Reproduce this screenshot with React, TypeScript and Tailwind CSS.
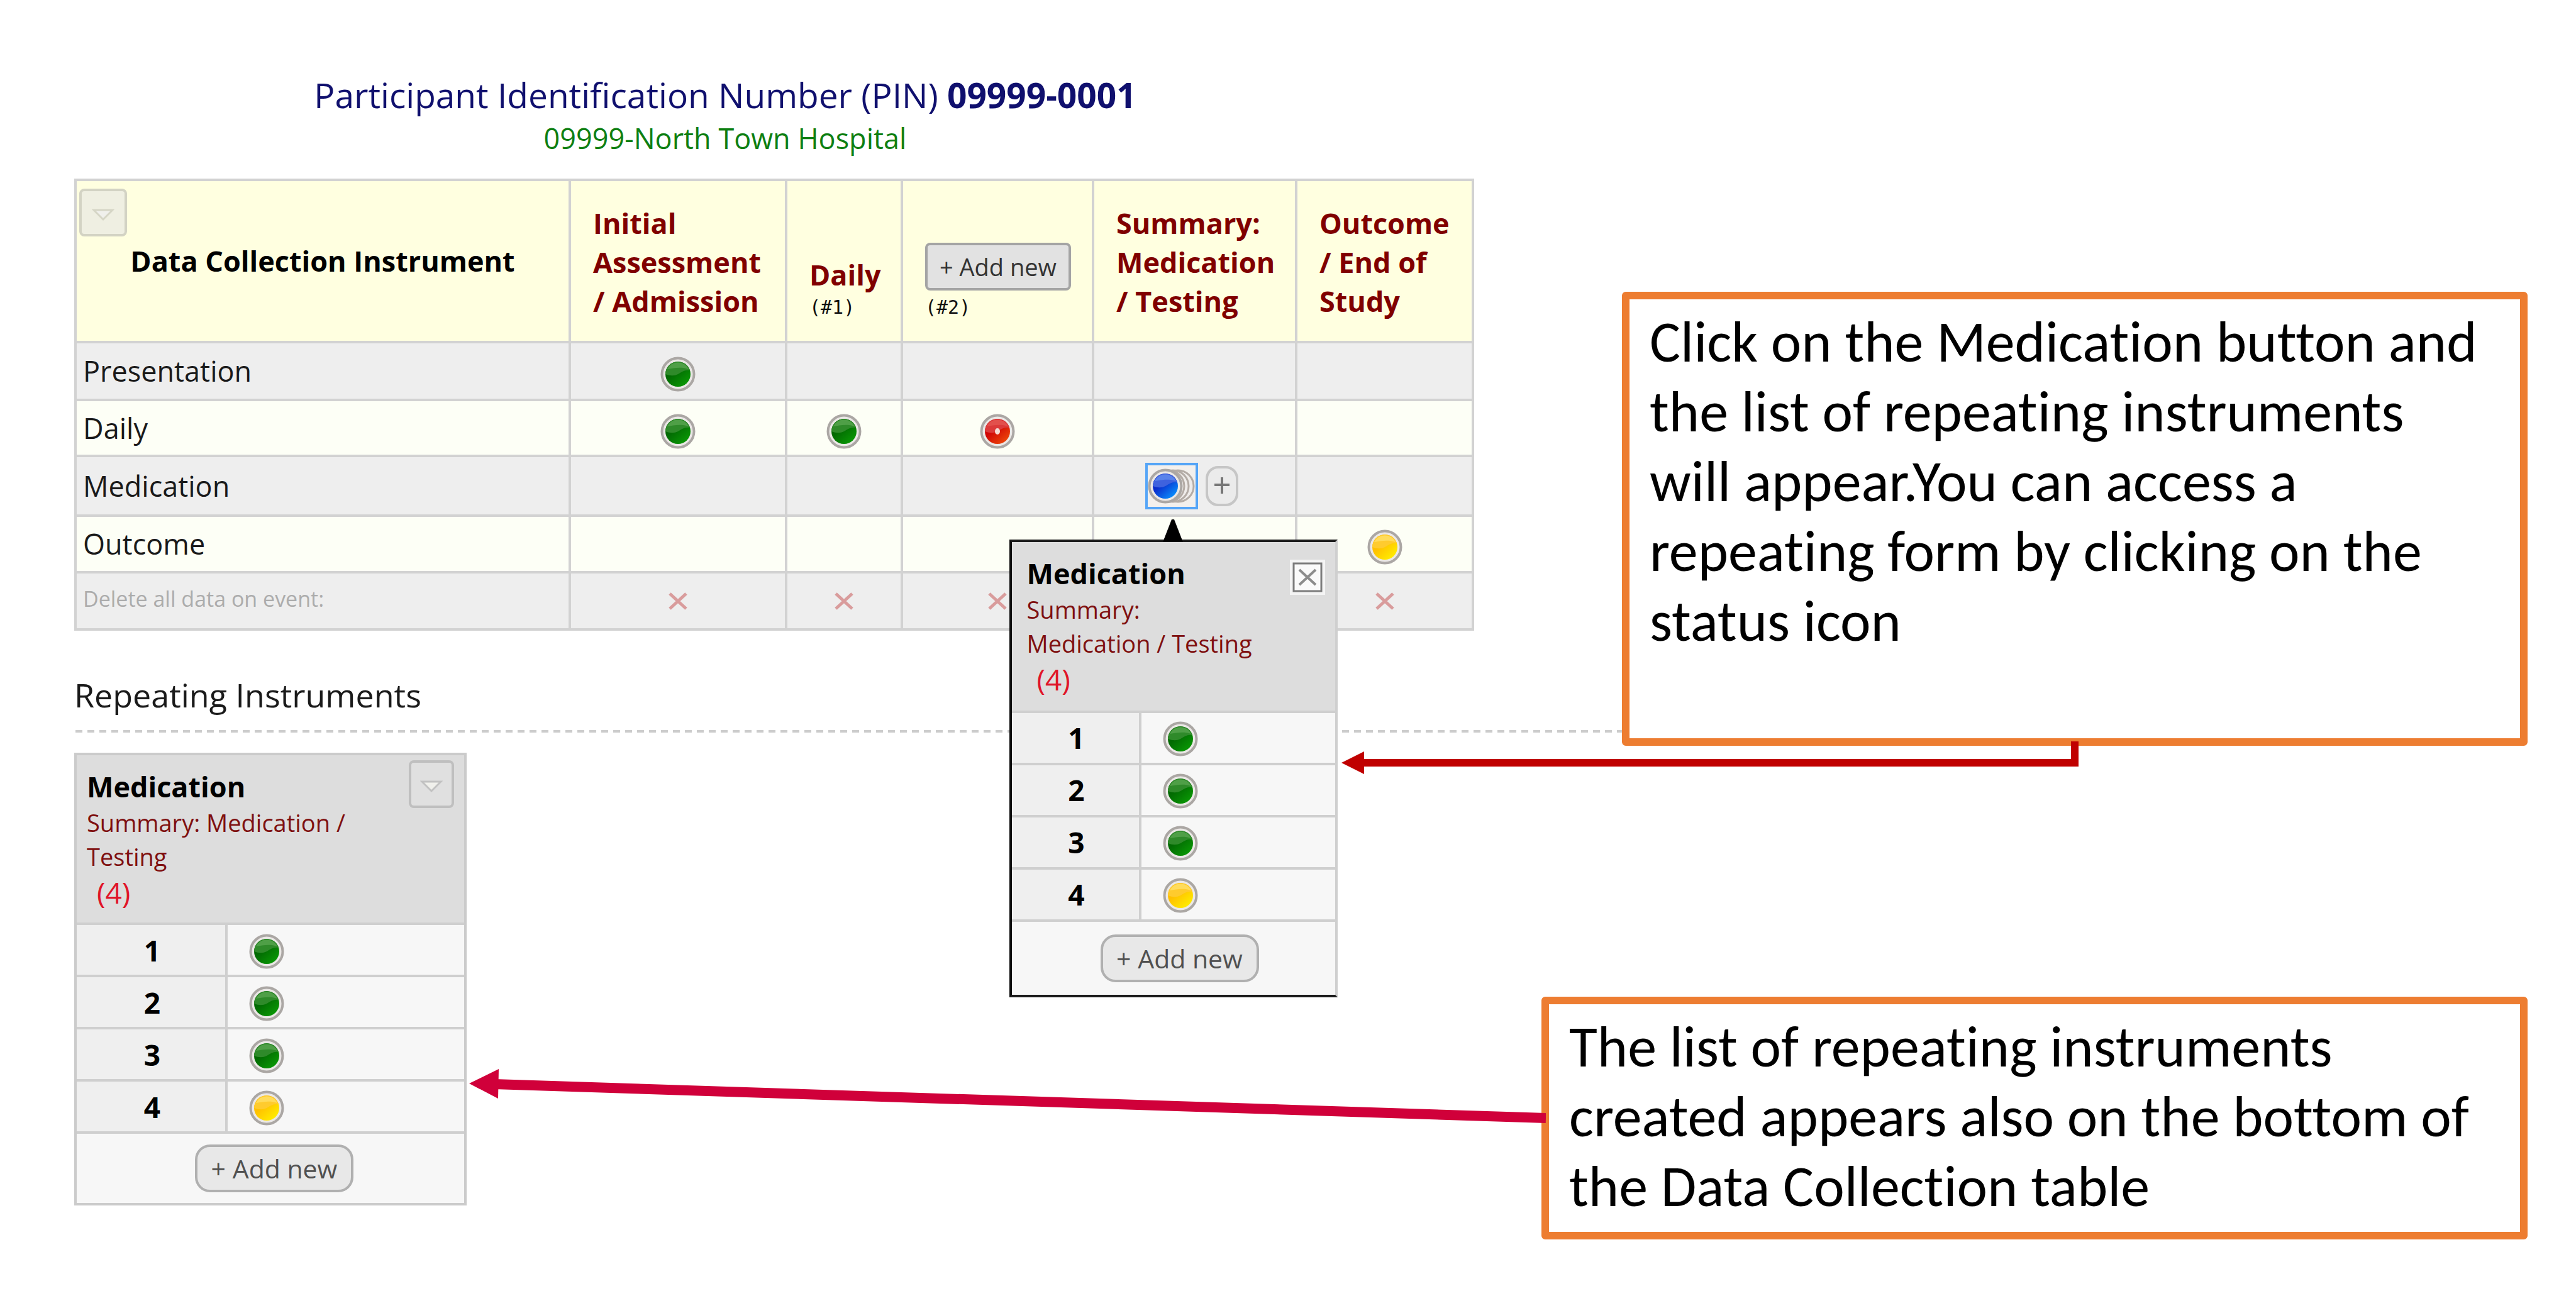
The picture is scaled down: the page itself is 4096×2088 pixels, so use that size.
import React from "react";

type Tone = "green" | "red" | "yellow" | "blue";

const TONES: Record<Tone, { light: string; mid: string; dark: string; glow: string }> = {
  green: { light: "#4f9f47", mid: "#2f8a2a", dark: "#026a02", glow: "#0a9a05" },
  red: { light: "#e2504c", mid: "#dc3a3a", dark: "#d00505", glow: "#ee4a0a" },
  yellow: { light: "#ffdc5c", mid: "#ffcb2e", dark: "#ffc000", glow: "#fff000" },
  blue: { light: "#5a83ea", mid: "#3f62de", dark: "#0a2ccc", glow: "#0a94ff" },
};

function StatusDot({ tone, stacked = false }: { tone: Tone; stacked?: boolean }) {
  const c = TONES[tone];
  const id = stacked ? "dot-stack-" + tone : "dot-" + tone;
  return (
    <svg
      className={stacked ? "h-14 w-19 shrink-0" : "h-14 w-14 shrink-0"}
      viewBox={stacked ? "0 0 76 56" : "0 0 56 56"}
      aria-hidden="true"
    >
      <defs>
        <linearGradient id={id} x1="0.2" y1="0.3" x2="0.8" y2="1">
          <stop offset="0.2" stopColor={c.dark} />
          <stop offset="1" stopColor={c.glow} />
        </linearGradient>
      </defs>
      {stacked &&
        [22, 14, 7].map((dx) => (
          <circle key={dx} cx={26 + dx} cy="28" r="25" fill="#efecea" stroke="#b4aca6" strokeWidth="3" />
        ))}
      <circle cx="28" cy="28" r="25.5" fill="#ebe8e6" stroke="#aba7a4" strokeWidth="4" />
      <circle cx="28" cy="28" r="20" fill={"url(#" + id + ")"} />
      <path d="M8 28a20 20 0 0 1 39-6C38 21 34 25 28 28S16 31 8 28Z" fill={c.mid} />
      <path d="M11 20a19 19 0 0 1 34 0C34 16 22 18 11 20Z" fill={c.light} />
      {tone === "red" && <ellipse cx="28" cy="28" rx="4" ry="5" fill="#f6dcd6" />}
    </svg>
  );
}

function MenuButton({ faint = false }: { faint?: boolean }) {
  return (
    <button
      type="button"
      aria-label="Options"
      className={
        faint
          ? "flex size-19 items-center justify-center rounded-lg border-4 border-[#d3d3c4] bg-[#efefe2] pt-2 text-[#d6d6c6]"
          : "flex size-19 items-center justify-center rounded-lg border-4 border-[#bfbfbf] bg-[#e0e0e0] pt-2 text-[#c2c2c2]"
      }
    >
      <svg className="h-5 w-9" viewBox="0 0 36 20" aria-hidden="true">
        <path d="M3 2h30L18 17Z" fill="#f0f0ec" stroke="currentColor" strokeWidth="3" />
      </svg>
    </button>
  );
}

function Cross() {
  return (
    <svg className="size-8" viewBox="0 0 32 32" aria-hidden="true">
      <path d="M3 4 29 28M29 4 3 28" fill="none" stroke="#d99c9c" strokeWidth="5" />
    </svg>
  );
}

function InstanceTable({
  event,
  action,
  popup = false,
}: {
  event: React.ReactNode;
  action: React.ReactNode;
  popup?: boolean;
}) {
  const line = "border-t-4 border-[#cfcfcf]";
  return (
    <div
      className={
        popup
          ? "border-4 border-y-[#1c1c1c] border-l-[#0c0c0c] border-r-[#cfcfcf] bg-[#f7f7f7]"
          : "border-4 border-[#cbcbcb] bg-[#f7f7f7]"
      }
    >
      <table className="w-full table-fixed border-collapse">
        <colgroup>
          <col className={popup ? "w-[204px]" : "w-[238px]"} />
          <col />
        </colgroup>
        <thead>
          <tr>
            <th
              colSpan={2}
              scope="colgroup"
              className={
                popup
                  ? "h-[270px] bg-[#dddddd] pt-2 pr-4 pl-6 text-left align-top font-normal"
                  : "h-[268px] bg-[#dddddd] px-4 pt-2 text-left align-top font-normal"
              }
            >
              <div className="flex items-start justify-between">
                <div className="pt-3">
                  <div className="text-[45px] leading-[60px] font-bold text-black">Medication</div>
                  <div className="text-[38px] leading-[54px] text-[#7f1010]">{event}</div>
                  <div className="pl-4 text-[46px] leading-[60px] text-[#e01428]">(4)</div>
                </div>
                {action}
              </div>
            </th>
          </tr>
        </thead>
        <tbody>
          {(["green", "green", "green", "yellow"] as Tone[]).map((tone, i) => (
            <tr key={i}>
              <th
                scope="row"
                className={"h-[83px] border-r-4 bg-[#efefef] pl-1 text-center text-[46px] leading-[60px] font-bold text-black " + line}
              >
                {i + 1}
              </th>
              <td className={"pl-[34px] " + line}>
                <a href="#" aria-label={"Instance " + (i + 1)} className="flex w-14 pt-1">
                  <StatusDot tone={tone} />
                </a>
              </td>
            </tr>
          ))}
        </tbody>
        <tfoot>
          <tr>
            <td colSpan={2} className={(popup ? "h-[118px] pl-5 text-center " : "h-[112px] pl-3 text-center ") + line}>
              <button
                type="button"
                className="h-19 w-[252px] rounded-3xl border-4 border-[#b0b0b0] bg-[#e8e8e8] text-[41px] leading-[60px] text-[#505050]"
              >
                + Add new
              </button>
            </td>
          </tr>
        </tfoot>
      </table>
    </div>
  );
}

const ROWS: { name: string; dots: (Tone | null)[]; height: string; tint: string }[] = [
  { name: "Presentation", dots: ["green", null, null, null, null], height: "h-[92px]", tint: "bg-[#eeeeee]" },
  { name: "Daily", dots: ["green", "green", "red", null, null], height: "h-[89px]", tint: "bg-[#fdfff6]" },
  { name: "Medication", dots: [null, null, null, "blue", null], height: "h-[95px]", tint: "bg-[#eeeeee]" },
  { name: "Outcome", dots: [null, null, null, null, "yellow"], height: "h-[90px]", tint: "bg-[#fdfff6]" },
];

function MedicationPopup() {
  return (
    <div className="absolute top-[122px] -left-[216px] z-10 w-[522px]">
      <svg className="absolute -top-8 left-[244px] h-9 w-8" viewBox="0 0 32 36" aria-hidden="true">
        <path d="M14 0h4L32 36H0Z" fill="#000000" />
      </svg>
      <InstanceTable
        popup
        event={
          <>
            Summary:
            <br />
            Medication / Testing
          </>
        }
        action={
          <button
            type="button"
            aria-label="Close"
            className="mt-5 flex size-14 items-center justify-center border-4 border-[#f4f4f4] bg-[#f4f4f4]"
          >
            <svg className="size-12" viewBox="0 0 48 48" aria-hidden="true">
              <rect x="2" y="2" width="44" height="44" fill="#fafafa" stroke="#7c7c7c" strokeWidth="3" />
              <path d="M11 12 37 36M37 12 11 36" fill="none" stroke="#8c8c8c" strokeWidth="4" />
            </svg>
          </button>
        }
      />
    </div>
  );
}

function EventGrid() {
  const line = "border-4 border-[#d2d2d2]";
  const head = "bg-[#ffffe0] pb-8 pl-[35px] text-left align-bottom text-[45px] leading-[62px] font-bold text-[#800000] " + line;
  const num = "block font-['DejaVu_Sans_Mono',monospace] text-[30px] leading-[42px] font-normal text-[#111111]";
  return (
    <table className="-ml-0.5 w-[2226px] table-fixed border-collapse">
      <colgroup>
        <col className="w-[786px]" />
        <col className="w-[344px]" />
        <col className="w-[184px]" />
        <col className="w-[304px]" />
        <col className="w-[323px]" />
        <col />
      </colgroup>
      <thead>
        <tr>
          <th scope="col" className={"relative h-[258px] bg-[#ffffe0] text-center text-[45px] leading-[62px] font-bold text-black " + line}>
            <div className="absolute top-3 left-1">
              <MenuButton faint />
            </div>
            Data Collection Instrument
          </th>
          <th scope="col" className={head}>
            Initial
            <br />
            Assessment
            <br />/ Admission
          </th>
          <th scope="col" className={head}>
            Daily
            <span className={num}>(#1)</span>
          </th>
          <th scope="col" className={head}>
            <button
              type="button"
              className="mb-1.5 block h-19 w-[232px] rounded-lg border-4 border-[#a4a4a4] bg-[#e2e2e2] text-[38px] leading-[60px] font-normal text-[#333333]"
            >
              + Add new
            </button>
            <span className={num}>(#2)</span>
          </th>
          <th scope="col" className={head}>
            Summary:
            <br />
            Medication
            <br />/ Testing
          </th>
          <th scope="col" className={head}>
            Outcome
            <br />/ End of
            <br />
            Study
          </th>
        </tr>
      </thead>
      <tbody>
        {ROWS.map((row) => (
          <tr key={row.name} className={row.tint}>
            <th scope="row" className={"pl-2.5 text-left text-[45px] leading-[60px] font-normal text-[#1a1a1a] " + row.height + " " + line}>
              {row.name}
            </th>
            {row.dots.map((tone, i) => (
              <td key={i} className={line}>
                {tone === "blue" ? (
                  <div className="flex items-center justify-center gap-3 pr-2.5">
                    <div className="relative flex">
                      <button
                        type="button"
                        aria-label="Medication instances"
                        className="flex h-[74px] w-[84px] items-center justify-center border-4 border-[#55a5f7] bg-[#f3f0ed]"
                      >
                        <StatusDot tone="blue" stacked />
                      </button>
                      <MedicationPopup />
                    </div>
                    <button
                      type="button"
                      aria-label="Add instance"
                      className="flex h-16 w-13 items-center justify-center rounded-[20px] border-4 border-[#c6c6c6] bg-[#ebebeb]"
                    >
                      <svg className="size-8" viewBox="0 0 32 32" aria-hidden="true">
                        <path d="M16 2v26M4 14h24" fill="none" stroke="#777777" strokeWidth="4" />
                      </svg>
                    </button>
                  </div>
                ) : (
                  tone && (
                    <a href="#" aria-label={row.name + " status"} className="mx-auto flex w-14 pt-2.5">
                      <StatusDot tone={tone} />
                    </a>
                  )
                )}
              </td>
            ))}
          </tr>
        ))}
        <tr className="bg-[#eeeeee]">
          <th scope="row" className={"h-[91px] pb-2 pl-2.5 text-left text-[34px] leading-[60px] font-normal text-[#acacac] " + line}>
            Delete all data on event:
          </th>
          {["Initial", "Daily 1", "Daily 2", "Summary", "Outcome"].map((name) => (
            <td key={name} className={line}>
              <button type="button" aria-label={"Delete " + name} className="mx-auto flex">
                <Cross />
              </button>
            </td>
          ))}
        </tr>
      </tbody>
    </table>
  );
}

export default function App() {
  return (
    <div className="relative flex min-h-screen bg-white pr-[77px] pl-[120px] font-['Open_Sans','Noto_Sans',sans-serif]">
      <main className="min-w-0 flex-1 pt-[116px]">
        <header className="w-[2222px] pr-[156px] text-center">
          <h1 className="text-[55px] leading-[70px] text-[#10106e]">
            Participant Identification Number (PIN) <b>09999-0001</b>
          </h1>
          <p className="text-[45px] leading-[68px] text-[#0e7f12]">09999-North Town Hospital</p>
        </header>
        <div className="pt-[30px]">
          <EventGrid />
        </div>
        <h2 className="-ml-0.5 pt-[66px] text-[52px] leading-[72px] text-[#1a1a1a]">Repeating Instruments</h2>
        <div className="mt-5 h-1 bg-[repeating-linear-gradient(90deg,#cccccc_0_11px,transparent_11px_19px)]" />
        <div className="-ml-0.5 w-[624px] pt-8">
          <InstanceTable event="Summary: Medication / Testing" action={<MenuButton />} />
        </div>
      </main>

      <aside className="flex w-[1440px] shrink-0 flex-col items-end pt-[464px] font-[Carlito,Lato,sans-serif] text-[92px] leading-[111px] text-black [font-variant-ligatures:none]">
        <p className="relative z-10 h-[722px] w-[1440px] rounded-md border-[12px] border-[#ed7d31] bg-white pt-3 pr-8 pl-8">
          Click on the Medication button and
          <br />
          the list of repeating instruments
          <br />
          will appear.You can access a
          <br />
          repeating form by clicking on the
          <br />
          status icon
        </p>
        <p className="mt-[399px] h-[386px] w-[1568px] shrink-0 rounded-md border-[12px] border-[#ed7d31] bg-white pt-3 pr-4 pl-8">
          The list of repeating instruments
          <br />
          created appears also on the bottom of
          <br />
          the Data Collection table
        </p>
      </aside>

      <svg className="pointer-events-none absolute top-[1170px] right-[780px] z-20 h-[70px] w-[1183px]" viewBox="0 0 1183 70" aria-hidden="true">
        <path d="M1166 9v34H30" fill="none" stroke="#c00000" strokeWidth="12" />
        <path d="M0 43 36 25v36Z" fill="#c00000" />
      </svg>
      <svg className="pointer-events-none absolute top-[1690px] right-[1638px] z-20 h-[110px] w-[1712px]" viewBox="0 0 1712 110" aria-hidden="true">
        <path d="M40 34 1712 88" fill="none" stroke="#d0003a" strokeWidth="16" />
        <path d="M0 33 47 10 46 57Z" fill="#d0003a" />
      </svg>
    </div>
  );
}
